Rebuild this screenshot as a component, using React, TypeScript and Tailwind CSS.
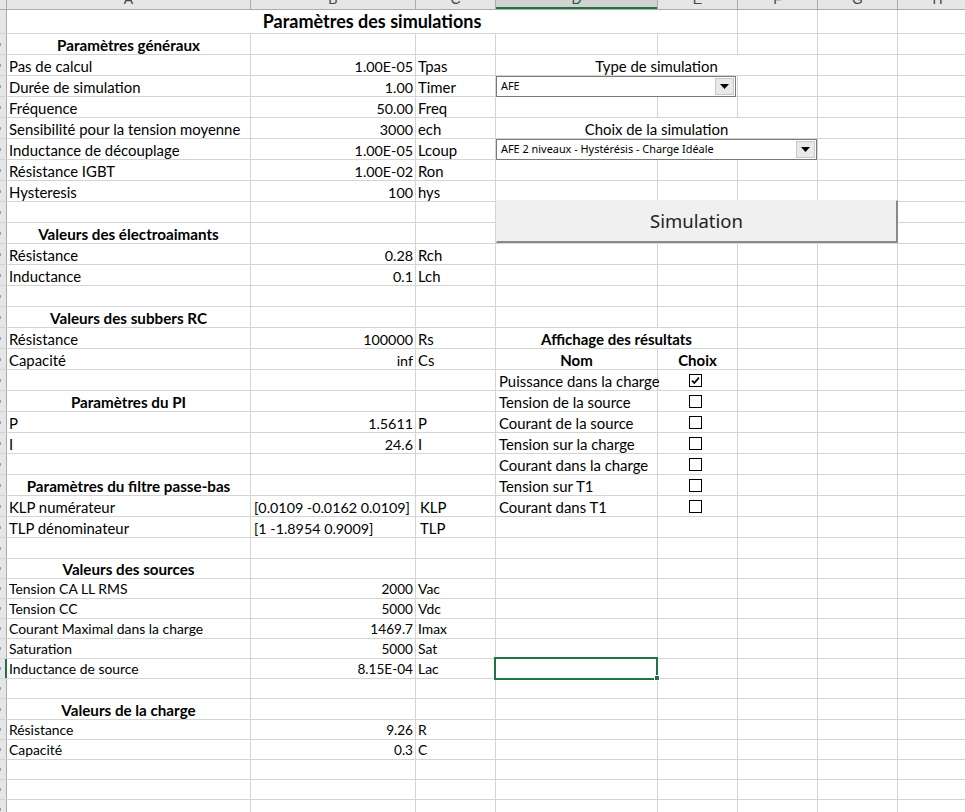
type Right =
  | { kind: "none" }
  | { kind: "type" }
  | { kind: "choix" }
  | { kind: "affichage" }
  | { kind: "nom" }
  | { kind: "result"; label: string; checked?: boolean };

type Row = {
  a?: string;
  bold?: boolean;
  b?: string;
  bLeft?: boolean;
  c?: string;
  cPad?: boolean;
  right?: Right;
  small?: boolean;
  tall?: boolean;
  sel?: boolean;
};

const rows: Row[] = [
  { a: "Paramètres généraux", bold: true },
  { a: "Pas de calcul", b: "1.00E-05", c: "Tpas", right: { kind: "type" } },
  { a: "Durée de simulation", b: "1.00", c: "Timer" },
  { a: "Fréquence", b: "50.00", c: "Freq" },
  { a: "Sensibilité pour la tension moyenne", b: "3000", c: "ech", right: { kind: "choix" } },
  { a: "Inductance de découplage", b: "1.00E-05", c: "Lcoup" },
  { a: "Résistance IGBT", b: "1.00E-02", c: "Ron" },
  { a: "Hysteresis", b: "100", c: "hys" },
  {},
  { a: "Valeurs des électroaimants", bold: true },
  { a: "Résistance", b: "0.28", c: "Rch" },
  { a: "Inductance", b: "0.1", c: "Lch" },
  {},
  { a: "Valeurs des subbers RC", bold: true },
  { a: "Résistance", b: "100000", c: "Rs", right: { kind: "affichage" } },
  { a: "Capacité", b: "inf", c: "Cs", right: { kind: "nom" } },
  { right: { kind: "result", label: "Puissance dans la charge", checked: true } },
  { a: "Paramètres du PI", bold: true, right: { kind: "result", label: "Tension de la source" } },
  { a: "P", b: "1.5611", c: "P", right: { kind: "result", label: "Courant de la source" } },
  { a: "I", b: "24.6", c: "I", right: { kind: "result", label: "Tension sur la charge" } },
  { right: { kind: "result", label: "Courant dans la charge" } },
  { a: "Paramètres du filtre passe-bas", bold: true, right: { kind: "result", label: "Tension sur T1" } },
  { a: "KLP numérateur", b: "[0.0109 -0.0162 0.0109]", bLeft: true, c: "KLP", cPad: true, right: { kind: "result", label: "Courant dans T1" } },
  { a: "TLP dénominateur", b: "[1 -1.8954 0.9009]", bLeft: true, c: "TLP", cPad: true },
  {},
  { a: "Valeurs des sources", bold: true, small: true },
  { a: "Tension CA LL RMS", b: "2000", c: "Vac", small: true },
  { a: "Tension CC", b: "5000", c: "Vdc", small: true },
  { a: "Courant Maximal dans la charge", b: "1469.7", c: "Imax", small: true },
  { a: "Saturation", b: "5000", c: "Sat", small: true },
  { a: "Inductance de source", b: "8.15E-04", c: "Lac", small: true, sel: true },
  { small: true },
  { a: "Valeurs de la charge", bold: true, small: true, tall: true },
  { a: "Résistance", b: "9.26", c: "R", small: true },
  { a: "Capacité", b: "0.3", c: "C", small: true },
  { small: true },
  { small: true },
  { small: true },
];

const cell = "shrink-0 h-full border-r border-[#d4d4d4] flex items-center overflow-visible whitespace-nowrap";

function Checkbox({ checked }: { checked?: boolean }) {
  return (
    <div className="w-[13px] h-[13px] border border-black bg-white flex items-center justify-center">
      {checked && (
        <svg width="11" height="11" viewBox="0 0 11 11">
          <path d="M2 5.6 L4.3 8 L9 2.6" fill="none" stroke="black" strokeWidth="1.7" />
        </svg>
      )}
    </div>
  );
}

function RightCells({ r }: { r?: Right }) {
  const tail = (
    <>
      <div className={`${cell} w-[80px]`} />
      <div className={`${cell} w-[80px]`} />
      <div className={`${cell} w-[80px]`} />
    </>
  );
  if (!r || r.kind === "none") {
    return (
      <>
        <div className={`${cell} w-[162px]`} />
        <div className={`${cell} w-[80px]`} />
        {tail}
      </>
    );
  }
  if (r.kind === "type" || r.kind === "choix") {
    return (
      <>
        <div className={`${cell} w-[322px] justify-center pt-[3px]`}>
          {r.kind === "type" ? "Type de simulation" : "Choix de la simulation"}
        </div>
        <div className={`${cell} w-[80px]`} />
        <div className={`${cell} w-[80px]`} />
      </>
    );
  }
  if (r.kind === "affichage") {
    return (
      <>
        <div className={`${cell} w-[242px] justify-center font-bold text-[15px] pt-[3px]`}>Affichage des résultats</div>
        {tail}
      </>
    );
  }
  if (r.kind === "nom") {
    return (
      <>
        <div className={`${cell} w-[162px] justify-center font-bold text-[15px] pt-[3px]`}>Nom</div>
        <div className={`${cell} w-[80px] justify-center font-bold text-[15px] pt-[3px]`}>Choix</div>
        {tail}
      </>
    );
  }
  return (
    <>
      <div className={`${cell} w-[162px] pl-[3px] pt-[3px]`}>{r.label}</div>
      <div className={`${cell} w-[80px] items-start pl-[31px] pt-[4px]`}>
        <Checkbox checked={r.checked} />
      </div>
      {tail}
    </>
  );
}

function SheetRow({ r }: { r: Row }) {
  const h = r.small ? (r.tall ? "h-[21px]" : "h-[20px]") : "h-[21px]";
  const size = r.small ? "text-[13.9px]" : "text-[14.9px]";
  const bSize = r.small ? "text-[13.6px]" : "text-[14.3px]";
  const pad = r.small ? "pt-[2px]" : "pt-[3px]";
  return (
    <div className={`flex ${h} ${size} border-b border-[#d4d4d4]`}>
      <div
        className={`shrink-0 w-[7px] h-full bg-[#e6e6e6] border-r ${
          r.sel ? "border-r-2 border-[#217346] bg-[#d2d2d2]" : "border-[#ababab]"
        } flex items-center`}
      >
        <span className="w-[1px] h-[3px] bg-[#7ba7d6]" />
      </div>
      <div className={`${cell} w-[244px] ${pad} ${r.bold ? "justify-center font-bold text-[15.2px]" : "pl-[2px]"}`}>
        {r.a}
      </div>
      <div className={`${cell} w-[165px] ${pad} ${bSize} ${r.bLeft ? "pl-[3px]" : "justify-end pr-[2px]"}`}>{r.b}</div>
      <div className={`${cell} w-[80px] ${pad} ${r.cPad ? "pl-[4px]" : "pl-[2px]"}`}>{r.c}</div>
      {r.sel ? (
        <>
          <div className={`${cell} w-[162px] relative`}>
            <div className="absolute -left-[2px] -top-[2px] w-[164px] h-[23px] border-2 border-[#217346]" />
            <div className="absolute -right-[3px] -bottom-[3px] w-[6px] h-[6px] bg-[#217346] border border-white" />
          </div>
          <div className={`${cell} w-[80px]`} />
          <div className={`${cell} w-[80px]`} />
          <div className={`${cell} w-[80px]`} />
          <div className={`${cell} w-[80px]`} />
        </>
      ) : (
        <RightCells r={r.right} />
      )}
    </div>
  );
}

function Dropdown({ text, className }: { text: string; className: string }) {
  return (
    <div
      className={`absolute ${className} bg-white border border-[#7a7a7a] flex items-center text-[10.9px] pl-[4px] font-['Noto_Sans',sans-serif]`}
    >
      <span className="flex-1 whitespace-nowrap">{text}</span>
      <div className="w-[19px] h-[17px] mr-[1px] bg-[#e9e9e9] border border-[#c8c8c8] flex items-center justify-center">
        <svg width="9" height="5" viewBox="0 0 9 5">
          <path d="M0 0 H9 L4.5 5 Z" fill="black" />
        </svg>
      </div>
    </div>
  );
}

const letters = [
  { l: "A", w: "w-[244px]" },
  { l: "B", w: "w-[165px]" },
  { l: "C", w: "w-[80px]" },
  { l: "D", w: "w-[162px]", sel: true },
  { l: "E", w: "w-[80px]" },
  { l: "F", w: "w-[80px]" },
  { l: "G", w: "w-[80px]" },
  { l: "H", w: "w-[80px]" },
];

export default function App() {
  return (
    <div className="relative w-[965px] h-[812px] overflow-hidden bg-white text-black font-['Lato',sans-serif]">
      {/* column headers */}
      <div className="flex h-[10px] bg-[#e6e6e6] border-b border-[#ababab]">
        <div className="shrink-0 w-[7px] h-full border-r border-[#ababab]" />
        {letters.map((c) => (
          <div
            key={c.l}
            className={`shrink-0 ${c.w} h-full border-r border-[#ababab] overflow-hidden flex justify-center relative ${
              c.sel ? "bg-[#d2d2d2] text-[#1e5a37]" : "text-[#444]"
            }`}
          >
            <span className="text-[14px] leading-none -mt-[8px] font-['Liberation_Sans',sans-serif]">{c.l}</span>
            {c.sel && <div className="absolute left-0 right-0 bottom-0 h-[2px] bg-[#217346]" />}
          </div>
        ))}
      </div>

      {/* title row, merged A:E */}
      <div className="flex h-[24px] border-b border-[#d4d4d4]">
        <div className="shrink-0 w-[7px] h-full bg-[#e6e6e6] border-r border-[#ababab]" />
        <div className="shrink-0 w-[731px] h-full border-r border-[#d4d4d4] flex items-center justify-center font-bold text-[18px]">
          Paramètres des simulations
        </div>
        <div className={`${cell} w-[80px]`} />
        <div className={`${cell} w-[80px]`} />
        <div className={`${cell} w-[80px]`} />
      </div>

      {rows.map((r, i) => (
        <SheetRow key={i} r={r} />
      ))}

      {/* form controls floating on the sheet */}
      <Dropdown text="AFE" className="left-[496px] top-[76px] w-[240px] h-[21px]" />
      <Dropdown
        text="AFE 2 niveaux - Hystérésis - Charge Idéale"
        className="left-[496px] top-[139px] w-[321px] h-[21px]"
      />
      <div className="absolute left-[496px] top-[200px] w-[402px] h-[43px] bg-[#f0f0f0] border-r-2 border-b-2 border-[#8a8a8a] border-l border-t border-l-[#f0f0f0] border-t-[#f0f0f0] flex items-center justify-center text-[18.5px] text-[#222] font-['Noto_Sans',sans-serif]">
        Simulation
      </div>
    </div>
  );
}
